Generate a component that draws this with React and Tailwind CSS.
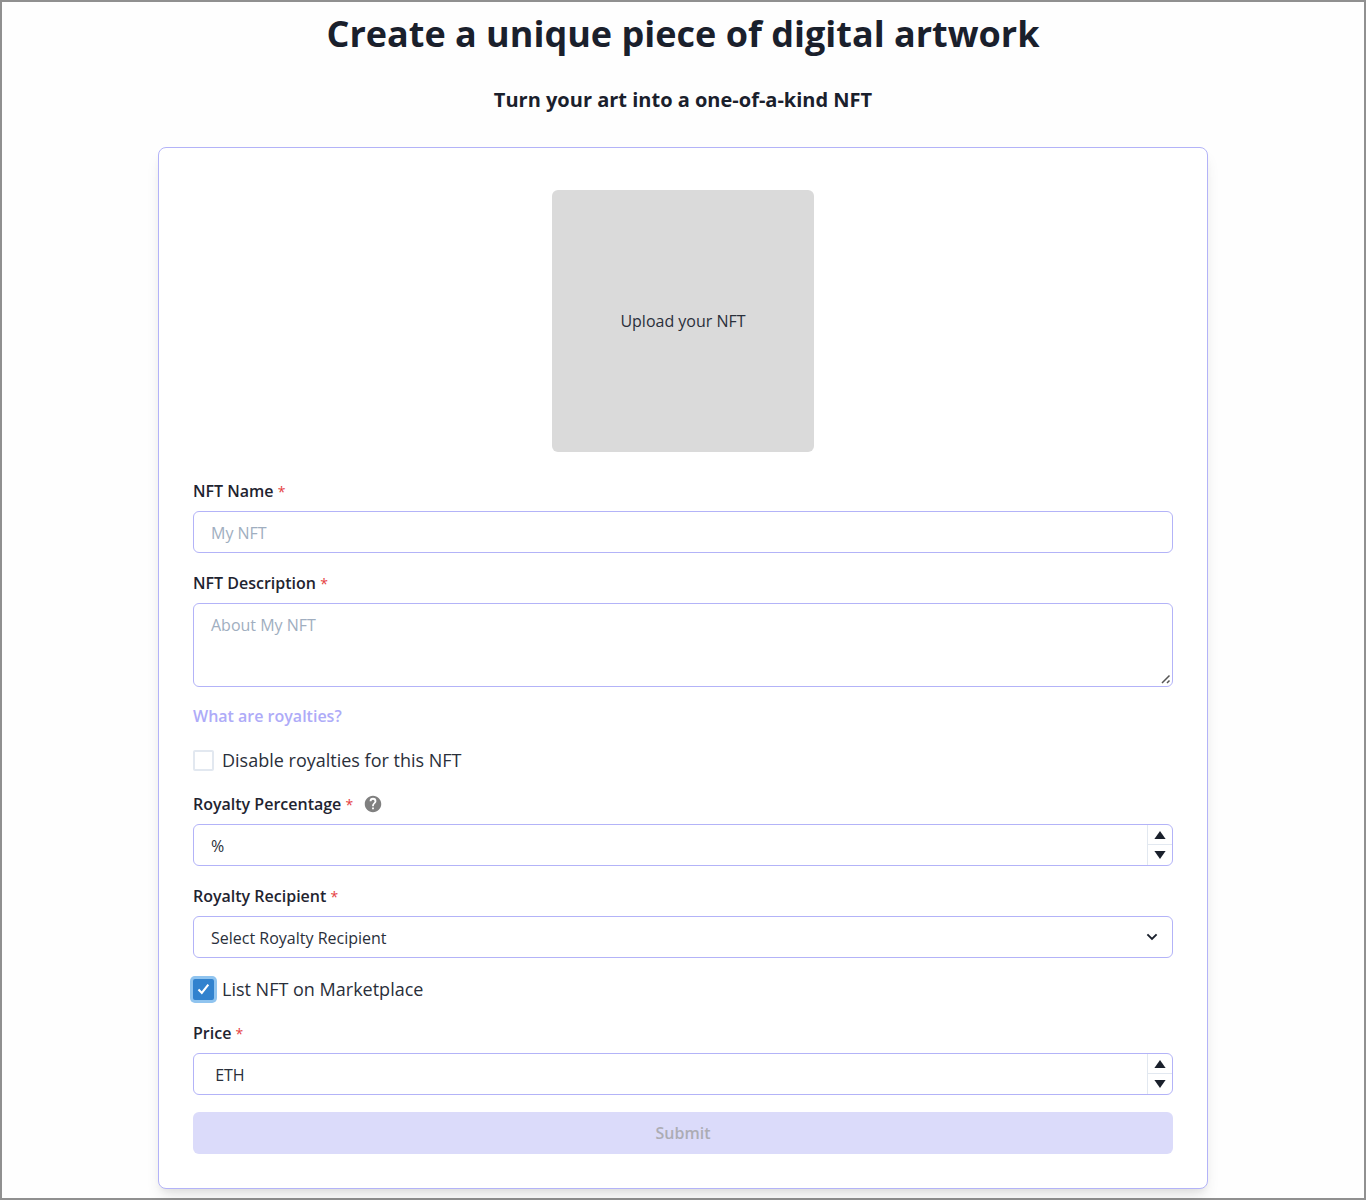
import { useId, useState } from "react";

const fieldClass =
  "block h-[42px] w-full rounded-md border border-[#b3b3f8] bg-white px-[17px] pt-[2px] text-base text-[#2a2f3a] outline-none placeholder:text-[#a0aec0]";

function FieldLabel({ htmlFor, children, extra }) {
  return (
    <div className="mb-2 flex h-[25px] items-center">
      <label htmlFor={htmlFor} className="text-base font-semibold text-[#1f2430]">
        {children}{" "}
        <span aria-hidden="true" className="text-sm leading-none font-normal text-[#e53e3e]">
          *
        </span>
      </label>
      {extra}
    </div>
  );
}

function Stepper() {
  return (
    <div className="absolute inset-y-px right-px flex w-[25px] flex-col border-l border-[#e2e8f0]">
      <button type="button" aria-label="Increase" className="flex h-5 items-center justify-center border-b border-[#e2e8f0]">
        <svg width="12" height="8" viewBox="0 0 12 8" aria-hidden="true">
          <path d="M6 0 L11.6 8 H0.4 Z" fill="#1a202c" />
        </svg>
      </button>
      <button type="button" aria-label="Decrease" className="flex flex-1 items-center justify-center">
        <svg width="12" height="8" viewBox="0 0 12 8" aria-hidden="true">
          <path d="M0.4 0 H11.6 L6 8 Z" fill="#1a202c" />
        </svg>
      </button>
    </div>
  );
}

function NumberField({ label, initial, extra }) {
  const id = useId();
  return (
    <div>
      <FieldLabel htmlFor={id} extra={extra}>
        {label}
      </FieldLabel>
      <div className="relative">
        <input id={id} type="text" inputMode="decimal" defaultValue={initial} className={fieldClass} />
        <Stepper />
      </div>
    </div>
  );
}

function CheckField({ label, initial }) {
  const [checked, setChecked] = useState(initial);
  return (
    <label className="flex h-7 items-center gap-2 text-lg text-[#2a2f3a]">
      <span className="relative flex size-[21px]">
        <input
          type="checkbox"
          checked={checked}
          onChange={(event) => setChecked(event.target.checked)}
          className="size-full appearance-none rounded-xs border-2 border-[#e2e8f0] outline-none checked:border-[#3182ce] checked:bg-[#3182ce] checked:shadow-[0_0_0_3px_#90c4ef]"
        />
        {checked && (
          <svg className="pointer-events-none absolute inset-0 m-auto" width="13" height="12" viewBox="0 0 13 12" aria-hidden="true">
            <path d="M1.5 6.6 L4.8 10 L11.3 1.6" fill="none" stroke="#fff" strokeWidth="2.1" />
          </svg>
        )}
      </span>
      {label}
    </label>
  );
}

function HelpIcon() {
  return (
    <button type="button" aria-label="About royalty percentage" className="ml-[11px] flex">
      <svg width="18" height="18" viewBox="0 0 24 24" fill="#808080" aria-hidden="true">
        <path d="M12 1C5.9 1 1 5.9 1 12s4.9 11 11 11 11-4.900 11-11S18.100 1 12 1zm1.200 18h-2.400v-2.400h2.400V19zm2.300-8.200-1 1c-.9.900-1.300 1.500-1.300 3.100h-2.400v-.6c0-1.200.5-2.300 1.300-3.100l1.400-1.400c.4-.4.6-.9.6-1.500a2.100 2.100 0 0 0-4.200 0H7.500a4.500 4.500 0 0 1 9 0c0 1-.4 1.900-1 2.500z" />
      </svg>
    </button>
  );
}

export default function App() {
  return (
    <main className="min-h-screen border-2 border-[#909090] bg-[#fefefe] px-4 pt-2 pb-[9px] font-['Open_Sans','Noto_Sans',sans-serif] text-[#1a202c]">
      <h1 className="text-center text-4xl leading-[48px] font-bold">Create a unique piece of digital artwork</h1>
      <h2 className="mt-[26px] text-center text-xl leading-8 font-bold">Turn your art into a one-of-a-kind NFT</h2>

      <form
        onSubmit={(event) => event.preventDefault()}
        className="mx-auto mt-[31px] flex max-w-[1050px] flex-col gap-[17px] rounded-lg border border-[#b3b3f8] bg-white px-[34px] pt-[42px] pb-[34px] shadow-[0_10px_15px_-3px_rgba(0,0,0,0.1),0_4px_6px_-2px_rgba(0,0,0,0.05)]"
      >
        <button type="button" className="mx-auto mb-[9px] flex size-[262px] items-center justify-center rounded-md bg-[#dadada] text-base text-[#2a2f3a]">
          Upload your NFT
        </button>

        <div>
          <FieldLabel htmlFor="nft-name">NFT Name</FieldLabel>
          <input id="nft-name" type="text" placeholder="My NFT" className={fieldClass} />
        </div>

        <div>
          <FieldLabel htmlFor="nft-description">NFT Description</FieldLabel>
          <div className="relative">
            <textarea
              id="nft-description"
              placeholder="About My NFT"
              className="block h-[84px] w-full resize-y rounded-md border border-[#b3b3f8] bg-white px-[17px] py-[9px] text-base outline-none placeholder:text-[#a0aec0] [&::-webkit-resizer]:bg-transparent"
            />
            <svg className="pointer-events-none absolute right-[2px] bottom-[3px]" width="10" height="10" viewBox="0 0 10 10" aria-hidden="true">
              <path d="M1 9 L8.500 1.500 M6 9 L8.500 6.500" fill="none" stroke="#555" strokeWidth="1.500" />
            </svg>
          </div>
        </div>

        <a href="#royalties" className="self-start text-base leading-[25px] font-semibold text-[#aeabf8]">
          What are royalties?
        </a>

        <CheckField label="Disable royalties for this NFT" initial={false} />

        <NumberField label="Royalty Percentage" initial="%" extra={<HelpIcon />} />

        <div>
          <FieldLabel htmlFor="royalty-recipient">Royalty Recipient</FieldLabel>
          <div className="relative">
            <select id="royalty-recipient" className={`${fieldClass} appearance-none`}>
              <option>Select Royalty Recipient</option>
            </select>
            <svg className="pointer-events-none absolute inset-y-0 right-[15px] my-auto" width="12" height="8" viewBox="0 0 12 8" aria-hidden="true">
              <path d="M1.4 1.400 L6 6 L10.600 1.400" fill="none" stroke="#1a202c" strokeWidth="1.900" />
            </svg>
          </div>
        </div>

        <CheckField label="List NFT on Marketplace" initial={true} />

        <NumberField label="Price" initial=" ETH" />

        <button type="submit" disabled className="h-[42px] w-full rounded-md bg-[#dbdbfa] text-base font-semibold text-[#acacb4]">
          Submit
        </button>
      </form>
    </main>
  );
}
